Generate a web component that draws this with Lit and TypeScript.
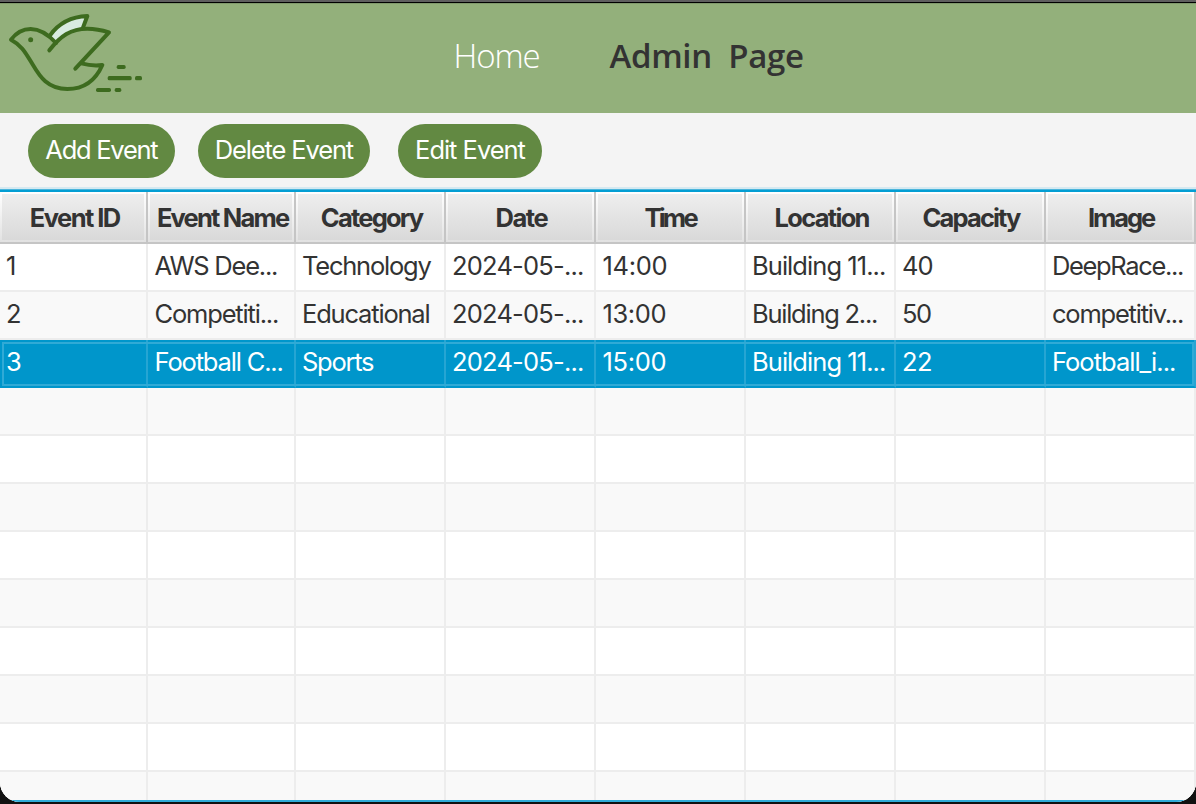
import { LitElement, html, css, svg } from "lit";
import { customElement, state } from "lit/decorators.js";
import { classMap } from "lit/directives/class-map.js";
import { styleMap } from "lit/directives/style-map.js";

type Label = [text: string, inkWidth: number, nudge?: number];

const FONT = "25.5px Inter";
const BOLD = "700 25.5px Inter";
const HOME_FONT = "300 33px 'Open Sans'";
const ADMIN_FONT = "600 33px 'Open Sans'";

const ctx = document.createElement("canvas").getContext("2d")!;

/* Tracks a label so that its glyphs span the wanted width. */
function tracked([text, width, nudge = 0]: Label, font: string) {
  ctx.font = font;
  const m = ctx.measureText(text);
  const ink = m.actualBoundingBoxRight + m.actualBoundingBoxLeft;
  const ls = text.length > 1 ? (width - ink) / (text.length - 1) : 0;
  const style = {
    letterSpacing: `${ls.toFixed(3)}px`,
    marginRight: `${(-ls).toFixed(3)}px`,
    transform: `translateX(${nudge}px)`,
  };
  return html`<span class="label" style=${styleMap(style)}>${text}</span>`;
}

const HEADERS: Label[] = [
  ["Event ID", 90, 2.5], ["Event Name", 132, 2.5], ["Category", 102, 2.5], ["Date", 52, 2],
  ["Time", 54, 1.5], ["Location", 94, 2.5], ["Capacity", 97.5, 2], ["Image", 67, 2],
];

const EVENTS: Label[][] = [
  [["1", 9, 0.5], ["AWS Dee...", 122.5, 0.5], ["Technology", 128.5], ["2024-05-...", 130], ["14:00", 63, 0.5], ["Building 11...", 131], ["40", 29.5], ["DeepRace...", 129]],
  [["2", 13, 0.5], ["Competiti...", 122.5, 0.5], ["Educational", 125.5], ["2024-05-...", 130], ["13:00", 62, 0.5], ["Building 2...", 123], ["50", 28], ["competitiv...", 130]],
  [["3", 13, 0.5], ["Football C...", 126, 0.5], ["Sports", 71], ["2024-05-...", 130], ["15:00", 62, 0.5], ["Building 11...", 131], ["22", 28], ["Football_i...", 121]],
];

const bird = svg`
  <g fill="none" stroke="#3d6b1f" stroke-width="12" stroke-linecap="round" stroke-linejoin="round">
    <path fill="#d8ebe0" stroke="none" d="M150 106C178 67 215 50 262 48L249 84C215 88 190 105 168 129Z"/>
    <path d="M150 106C178 67 215 50 262 48L249 83"/>
    <path d="M168 129C137 95 115 87 92 87C65 87 48 99 33 119C66 136 78 161 99 195C119 229 143 267 202 267C252 267 287 241 307 195C285 198 266 196 244 190"/>
    <path d="M148 151C182 107 213 86 262 86C286 86 305 90 327 97L226 206"/>
  </g>
  <g fill="#3d6b1f">
    <circle cx="92" cy="119" r="7.5"/>
    <rect x="350" y="195" width="27" height="12" rx="5"/>
    <rect x="323" y="228" width="72" height="13" rx="5"/>
    <rect x="405" y="228" width="21" height="13" rx="5"/>
    <rect x="288" y="264" width="45" height="12" rx="5"/>
    <rect x="344" y="264" width="20" height="12" rx="5"/>
  </g>`;

@customElement("app-root")
export class AppRoot extends LitElement {
  @state() private selected = 2;

  static styles = css`
    :host { display: block; width: 1196px; height: 804px; overflow: hidden; background: #111; font-family: Inter, "Liberation Sans", sans-serif; }
    * { box-sizing: border-box; }
    .window { display: flex; flex-direction: column; height: 802px; background: #f4f4f4; border-radius: 0 0 20px 20px; overflow: hidden; }
    .edge { height: 3px; flex: none; background: #5f5f5f; border-bottom: 1px solid #000; }
    .banner { flex: none; height: 110px; display: grid; grid-template-columns: 453.5px 156px 1fr; background: #93b07b; border-top: 1px solid #819a6d; }
    .logo { width: 160px; height: 120px; margin-top: -4px; display: block; }
    .nav { padding-top: 30px; white-space: pre; }
    .home { color: #fff; font: 300 33px/44px "Open Sans", sans-serif; }
    .admin { color: #333; font: 600 33px/44px "Open Sans", sans-serif; }
    .label { display: inline-block; white-space: pre; }
    .toolbar { flex: none; height: 74px; display: flex; align-items: flex-start; padding: 11px 0 0 28px; }
    .btn { height: 54px; border: 0; border-radius: 27px; background: #628942; color: #fff; font: 25.5px/52px Inter, sans-serif; padding: 0 0 2px 1px; text-align: center; }
    .add { width: 147px; margin-right: 23px; }
    .delete { width: 172px; margin-right: 28px; }
    .edit { width: 144px; }
    .table { flex: 1; min-height: 0; display: flex; flex-direction: column; overflow: hidden; border-top: 2px solid #d5e9f1; border-bottom: 2px solid #2fabd8; background: #fff; }
    .accent { height: 3px; flex: none; background: #039ed3; border-top: 1px solid #4cb5db; }
    .row, .head { display: grid; grid-template-columns: 148px 148px repeat(6, 150px); flex: none; }
    .head { height: 52px; }
    .th { height: 52px; border-right: 2px solid #c5c5c5; border-bottom: 2px solid #c5c5c5; background: linear-gradient(#fff, #e2e2e2); padding: 2px; display: flex; }
    .thin { flex: 1; min-width: 0; display: flex; justify-content: center; padding-top: 2px; background: linear-gradient(#eeeeee, #d9d9d9); color: #333; font: 700 25.5px/44px Inter, sans-serif; }
    .row { height: 48px; background: #fff; color: #333; position: relative; }
    .row.alt { background: #f9f9f9; }
    .td { border-right: 2px solid #ededed; border-bottom: 2px solid #ededed; padding-left: 6px; font: 25.5px/44px Inter, sans-serif; overflow: hidden; }
    .td:first-child { padding-left: 5.5px; }
    .row.sel { background: #0096cb; color: #fff; }
    .row.sel .td { border-right-color: #26a5d3; border-bottom-color: transparent; }
    .row.sel::after { content: ""; position: absolute; inset: 2px; border: 2px solid #30aad6; }
  `;

  private row(i: number) {
    const cells = EVENTS[i] ?? [];
    const cls = { row: true, alt: i % 2 === 1, sel: i === this.selected };
    return html`<div class=${classMap(cls)} @click=${() => { if (EVENTS[i]) this.selected = i; }}>
      ${HEADERS.map((_, c) => html`<div class="td">${cells[c] ? tracked(cells[c], FONT) : ""}</div>`)}
    </div>`;
  }

  render() {
    return html`<div class="window">
      <div class="edge"></div>
      <header class="banner">
        <svg class="logo" viewBox="0 0 480 360">${bird}</svg>
        <div class="nav home">${tracked(["Home", 83], HOME_FONT)}</div>
        <div class="nav admin">${tracked(["Admin  Page", 193.5], ADMIN_FONT)}</div>
      </header>
      <div class="toolbar">
        <button class="btn add">${tracked(["Add Event", 113], FONT)}</button>
        <button class="btn delete">${tracked(["Delete Event", 137], FONT)}</button>
        <button class="btn edit">${tracked(["Edit Event", 108.5], FONT)}</button>
      </div>
      <div class="table">
        <div class="accent"></div>
        <div class="head">
          ${HEADERS.map((h) => html`<div class="th"><div class="thin">${tracked(h, BOLD)}</div></div>`)}
        </div>
        ${Array.from({ length: 12 }, (_, i) => this.row(i))}
      </div>
    </div>`;
  }
}
